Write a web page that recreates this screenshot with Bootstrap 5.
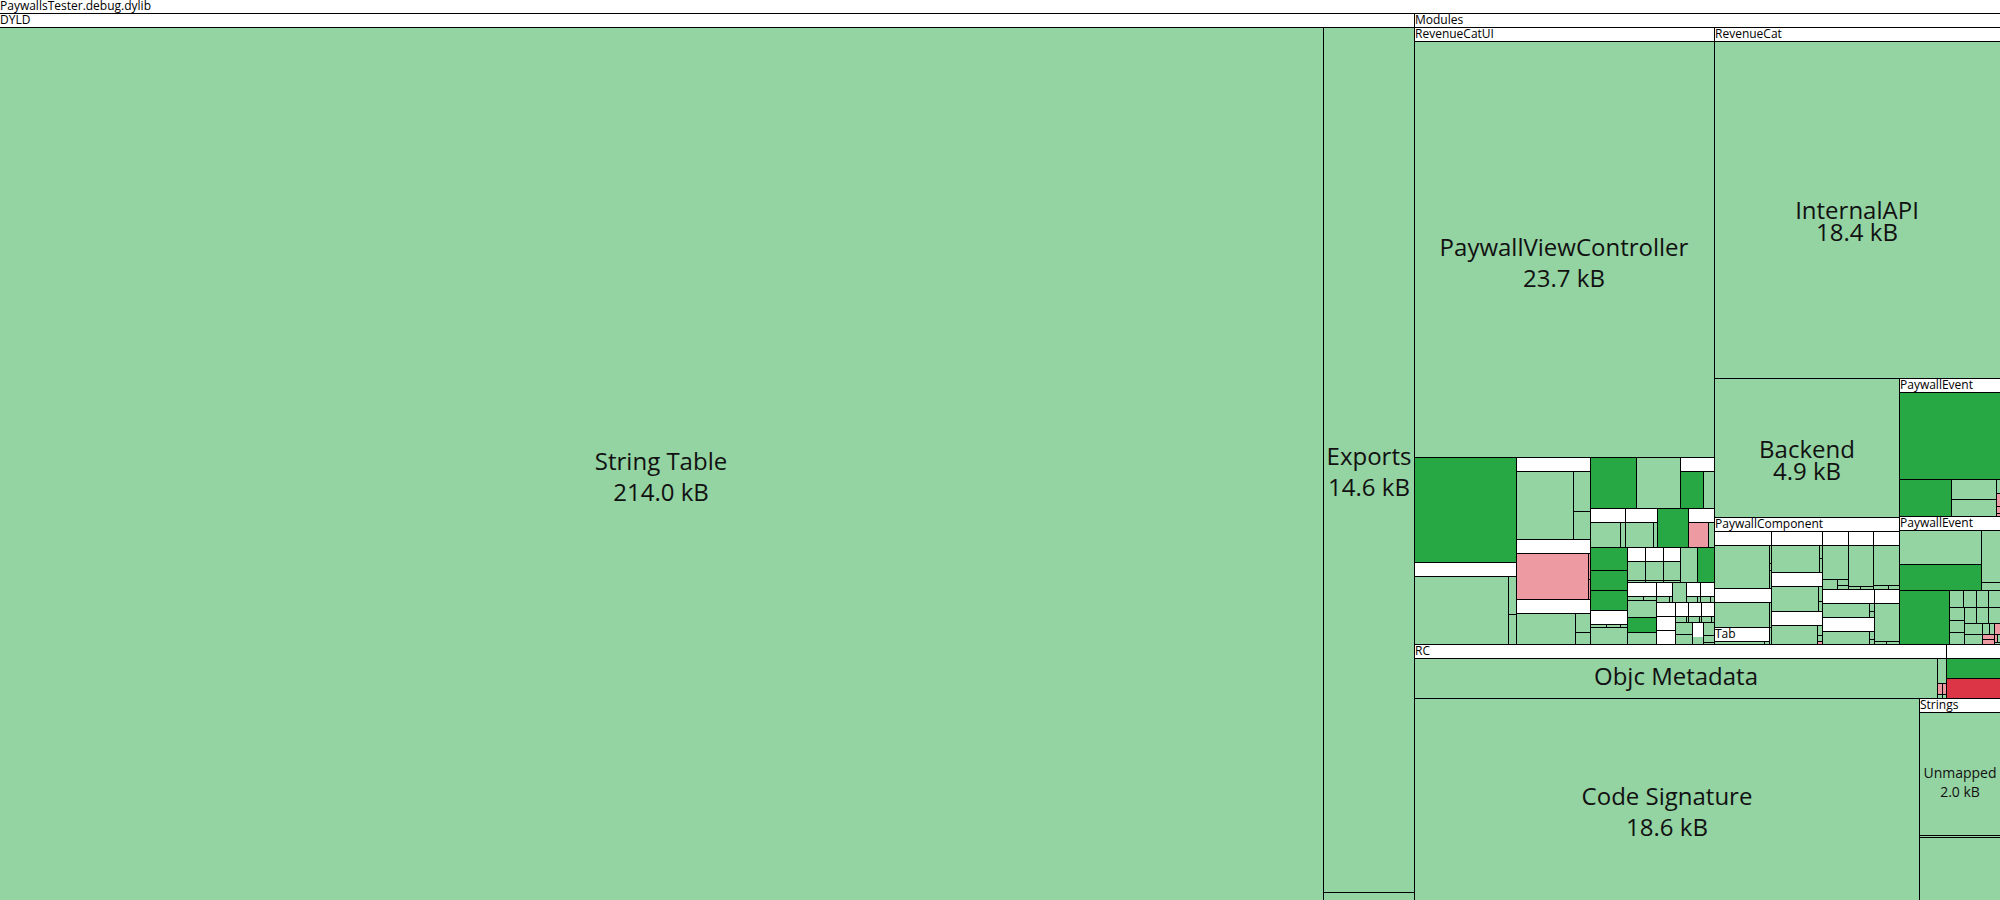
<!DOCTYPE html>
<html lang="en">
<head>
    <meta charset="UTF-8">
    <meta name="viewport" content="width=device-width, initial-scale=1.0">
    <title>PaywallsTester.debug.dylib</title>
    <link href="https://cdn.jsdelivr.net/npm/bootstrap@5.3.0/dist/css/bootstrap.min.css" rel="stylesheet" />
    <style>
        html, body { height: 100%; background: #fff; }
        body { font-family: "Open Sans", "Liberation Sans", sans-serif; color: #000; overflow: hidden; }
        .tm-canvas { width: 2000px; height: 900px; }
        .tm-cell { border: 1px solid #000; font-size: 12px; line-height: 12px; padding-left: 0; white-space: nowrap; }
        .tm-l { background: #94d3a2; }
        .tm-d { background: #28a745; }
        .tm-w { background: #fff; }
        .tm-x { background: #fff; border-bottom: 0; }
        .tm-p { background: #ed9aa2; }
        .tm-r { background: #dc3545; }
        .tm-text { color: #111; white-space: nowrap; }
    </style>
</head>
<body>
    <div class="tm-canvas position-relative overflow-hidden" id="map"></div>
    <script src="https://cdn.jsdelivr.net/npm/bootstrap@5.3.0/dist/js/bootstrap.bundle.min.js"></script>
    <script>
        // big boxes, real pixels: kind, x1, x2, y1, y2, label
        const big = [
            ['w', -1, 2000, -1, 13, 'PaywallsTester.debug.dylib'],
            ['w', -1, 1414, 13, 27, 'DYLD'],
            ['l', -1, 1323, 27, 900],
            ['l', 1323, 1414, 27, 892],
            ['l', 1323, 1414, 892, 900],
            ['w', 1414, 2000, 13, 27, 'Modules'],
            ['w', 1414, 1714, 27, 41, 'RevenueCatUI'],
            ['l', 1414, 1714, 41, 457],
            ['w', 1714, 2000, 27, 41, 'RevenueCat'],
            ['l', 1714, 2000, 41, 378],
            ['l', 1714, 1899, 378, 517],
            ['w', 1899, 2000, 378, 392, 'PaywallEvent'],
            ['d', 1899, 2000, 392, 479],
            ['d', 1899, 1951, 479, 516],
            ['l', 1951, 1996, 479, 499],
            ['l', 1951, 1996, 499, 516],
            ['l', 1996, 2000, 479, 493],
            ['p', 1996, 2000, 493, 506],
            ['p', 1996, 2000, 506, 513],
            ['p', 1996, 2000, 513, 516],
            ['w', 1899, 2000, 516, 530, 'PaywallEvent'],
            ['w', 1714, 1899, 517, 531, 'PaywallComponent'],
            ['w', 1414, 1946, 644, 658, 'RC'],
            ['w', 1946, 2000, 644, 658],
            ['l', 1414, 1937, 658, 698],
            ['d', 1946, 2000, 658, 678],
            ['r', 1946, 2000, 678, 698],
            ['l', 1414, 1919, 698, 900],
            ['w', 1919, 2000, 698, 712, 'Strings'],
            ['l', 1919, 2000, 712, 835],
            ['l', 1919, 2000, 835, 837],
            ['l', 1919, 2000, 837, 900],
        ];

        // small boxes were measured on 3x crops: [origin x, origin y, boxes]
        const crops = [
            [1400, 440, [
                ['d', 44, 349, 52, 367], ['w', 44, 349, 367, 409], ['l', 44, 325, 409, 612],
                ['l', 325, 349, 409, 523], ['l', 325, 349, 523, 612],
                ['w', 349, 571, 52, 94], ['l', 349, 520, 94, 297], ['l', 520, 571, 94, 214], ['l', 520, 571, 214, 297],
                ['w', 349, 571, 297, 340], ['p', 349, 565, 340, 478], ['p', 565, 571, 340, 418], ['p', 565, 571, 418, 478],
                ['w', 349, 571, 478, 520], ['l', 349, 526, 520, 612], ['l', 526, 571, 520, 577], ['l', 526, 571, 577, 612],
                ['d', 571, 709, 52, 205], ['l', 709, 841, 52, 205], ['w', 841, 943, 52, 94],
                ['d', 841, 910, 94, 205], ['l', 910, 943, 94, 205],
                ['w', 571, 676, 205, 247], ['l', 571, 661, 247, 322], ['l', 661, 676, 247, 322],
                ['w', 676, 772, 205, 247], ['l', 676, 760, 247, 322], ['l', 760, 772, 247, 322],
                ['d', 772, 865, 205, 322], ['w', 865, 943, 205, 247], ['p', 865, 925, 247, 322], ['l', 925, 943, 247, 322],
                ['d', 571, 682, 322, 391], ['d', 571, 682, 391, 451], ['d', 571, 682, 451, 511], ['w', 571, 682, 511, 553],
                ['l', 571, 619, 553, 562], ['l', 619, 661, 553, 562], ['l', 661, 682, 553, 562], ['l', 571, 682, 562, 612],
                ['w', 682, 736, 322, 364], ['w', 736, 790, 322, 364], ['w', 790, 841, 322, 364],
                ['l', 682, 736, 364, 421], ['l', 736, 790, 364, 421], ['l', 790, 841, 364, 421],
                ['l', 682, 736, 421, 427], ['l', 736, 790, 421, 427], ['l', 790, 841, 421, 427],
                ['l', 841, 892, 322, 427], ['d', 892, 943, 322, 427],
                ['w', 682, 769, 427, 469], ['l', 682, 730, 469, 481], ['l', 730, 769, 469, 481],
                ['w', 769, 817, 427, 469], ['l', 769, 808, 469, 487], ['l', 808, 817, 469, 487], ['l', 817, 859, 427, 487],
                ['w', 859, 901, 427, 469], ['w', 901, 943, 427, 469],
                ['l', 859, 892, 469, 487], ['l', 892, 901, 469, 487], ['l', 901, 931, 469, 487], ['l', 931, 943, 469, 487],
                ['l', 682, 769, 481, 532], ['d', 682, 769, 532, 577], ['l', 682, 769, 577, 612],
                ['w', 769, 826, 487, 529], ['w', 826, 865, 487, 529], ['w', 865, 904, 487, 529], ['w', 904, 943, 487, 529],
                ['w', 769, 826, 529, 571], ['w', 769, 826, 571, 612],
                ['l', 826, 859, 529, 547], ['l', 859, 865, 529, 547], ['l', 865, 898, 529, 547], ['l', 898, 904, 529, 547],
                ['l', 904, 934, 529, 547], ['l', 934, 943, 529, 547],
                ['l', 826, 877, 547, 583], ['l', 826, 877, 583, 612],
                ['l', 877, 910, 547, 612], ['x', 877, 910, 547, 588],
                ['l', 910, 943, 547, 586], ['l', 910, 943, 586, 606], ['l', 910, 943, 606, 612],
            ]],
            [1700, 500, [
                ['w', 44, 214, 94, 136], ['l', 44, 208, 136, 265], ['l', 208, 214, 136, 190], ['l', 208, 214, 190, 210], ['l', 208, 214, 210, 265],
                ['w', 44, 214, 265, 307], ['l', 44, 208, 307, 382], ['l', 208, 214, 307, 382],
                ['w', 44, 208, 382, 424, 'Tab'], ['l', 44, 193, 424, 433], ['l', 193, 208, 424, 433], ['l', 208, 214, 382, 433],
                ['w', 214, 367, 94, 136], ['l', 214, 358, 136, 217], ['l', 358, 367, 136, 175], ['l', 358, 367, 175, 217],
                ['w', 214, 367, 217, 259], ['l', 214, 355, 259, 334], ['l', 355, 367, 259, 303], ['l', 355, 367, 303, 334],
                ['w', 214, 367, 334, 376], ['l', 214, 352, 376, 433], ['l', 352, 367, 376, 406], ['l', 352, 367, 406, 424], ['p', 352, 367, 424, 433],
                ['w', 367, 445, 94, 136], ['w', 445, 520, 94, 136], ['w', 520, 598, 94, 136],
                ['l', 367, 445, 136, 238], ['l', 367, 412, 238, 268], ['l', 412, 445, 238, 256], ['l', 412, 445, 256, 268],
                ['l', 445, 520, 136, 259], ['l', 445, 481, 259, 268], ['l', 481, 520, 259, 268],
                ['l', 520, 598, 136, 256], ['l', 520, 565, 256, 268], ['l', 565, 598, 256, 268],
                ['w', 367, 523, 268, 310], ['w', 523, 598, 268, 310],
                ['l', 367, 508, 310, 352], ['l', 508, 523, 310, 334], ['l', 508, 523, 334, 352],
                ['w', 367, 523, 352, 394], ['l', 367, 508, 394, 433], ['l', 508, 523, 394, 418], ['l', 508, 523, 418, 433],
                ['l', 523, 598, 310, 424], ['l', 523, 559, 424, 433], ['l', 559, 598, 424, 433],
            ]],
            [1850, 510, [
                ['l', 148, 394, 61, 163], ['d', 148, 394, 163, 240], ['l', 394, 450, 61, 217], ['l', 394, 450, 217, 240],
                ['d', 148, 298, 240, 402],
                ['l', 298, 340, 240, 291], ['l', 340, 379, 240, 291], ['l', 379, 415, 240, 291], ['l', 415, 450, 240, 291],
                ['l', 298, 343, 291, 331], ['l', 298, 343, 331, 367], ['l', 298, 343, 367, 402],
                ['l', 343, 379, 291, 340], ['l', 379, 415, 291, 340], ['l', 415, 450, 291, 340],
                ['l', 343, 397, 340, 373], ['l', 397, 418, 340, 373], ['l', 418, 433, 340, 373], ['p', 433, 450, 340, 373],
                ['l', 343, 397, 373, 402], ['p', 397, 433, 373, 388], ['p', 397, 433, 388, 402],
                ['p', 433, 442, 373, 397], ['l', 442, 450, 373, 397], ['l', 433, 450, 397, 402],
                ['l', 262, 289, 445, 520], ['p', 262, 277, 520, 553], ['p', 277, 289, 520, 553],
                ['l', 262, 277, 553, 565], ['l', 277, 289, 553, 565],
            ]],
        ];

        // the named totals: text, centre x, centre y, font size, line height, box width
        const totals = [
            ['String Table<br>214.0 kB', 661, 476, 24, 31, 200],
            ['Exports<br>14.6 kB', 1369, 471, 24, 31, 90],
            ['PaywallViewController<br>23.7 kB', 1564, 262, 24, 31, 280],
            ['InternalAPI<br>18.4 kB', 1857, 221, 24, 22, 140],
            ['Backend<br>4.9 kB', 1807, 460, 24, 22, 110],
            ['Objc Metadata', 1676, 676, 24, 30, 200],
            ['Code Signature<br>18.6 kB', 1667, 811, 24, 31, 200],
            ['Unmapped<br>2.0 kB', 1960, 782, 14, 19, 78],
        ];

        const map = document.querySelector('#map');

        const pintaCaja = (kind, x1, x2, y1, y2, label) => {
            const div = document.createElement('div');
            div.className = 'tm-cell position-absolute tm-' + kind;
            div.style.left = x1 + 'px';
            div.style.top = y1 + 'px';
            div.style.width = (x2 - x1 + 1) + 'px';
            div.style.height = (y2 - y1 + 1) + 'px';
            if (label) div.textContent = label;
            map.appendChild(div);
        };

        big.forEach((b) => pintaCaja(...b));
        crops.forEach(([ox, oy, boxes]) => {
            boxes.forEach(([kind, x1, x2, y1, y2, label]) => {
                pintaCaja(kind, ox + Math.floor(x1 / 3), ox + Math.floor(x2 / 3),
                    oy + Math.floor(y1 / 3), oy + Math.floor(y2 / 3), label);
            });
        });

        totals.forEach(([text, cx, cy, size, lh, w]) => {
            const div = document.createElement('div');
            const lines = text.split('<br>').length;
            div.className = 'tm-text position-absolute text-center';
            div.innerHTML = text;
            div.style.left = (cx - w / 2) + 'px';
            div.style.width = w + 'px';
            div.style.top = (cy - lines * lh / 2) + 'px';
            div.style.fontSize = size + 'px';
            div.style.lineHeight = lh + 'px';
            map.appendChild(div);
        });
    </script>
</body>
</html>
